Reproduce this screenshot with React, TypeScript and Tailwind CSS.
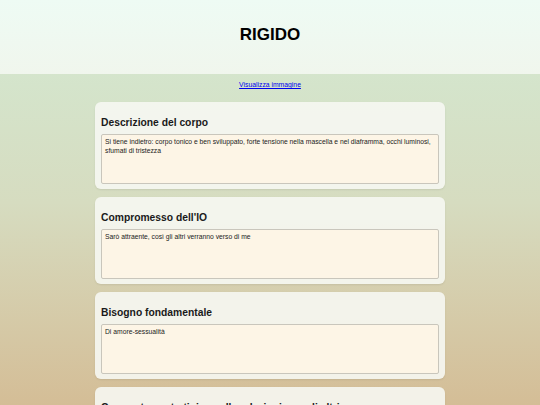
const sections = [
  {
    title: 'Descrizione del corpo',
    text: 'Si tiene indietro: corpo tonico e ben sviluppato, forte tensione nella mascella e nel diaframma, occhi luminosi, sfumati di tristezza',
  },
  { title: "Compromesso dell'IO", text: 'Sarò attraente, così gli altri verranno verso di me' },
  { title: 'Bisogno fondamentale', text: 'Di amore-sessualità' },
  { title: 'Comportamento tipico nelle relazioni con gli altri', text: 'Competitivo, orgoglioso, controlla i sentimenti' },
];

export default function App() {
  return (
    <div
      className="min-h-screen bg-fixed bg-gradient-to-b from-[#d3ead3] via-[#d6dcc0] to-[#d4bd96] text-black"
      style={{ fontFamily: '"Liberation Sans", Arial, sans-serif' }}
    >
      {/* Header */}
      <header className="h-[74px] flex items-center justify-center bg-gradient-to-b from-[#eefbf4] to-[#f0f6ed]">
        <h1 className="text-[17px] font-bold leading-none -mt-[5px]">RIGIDO</h1>
      </header>

      <div className="flex justify-center pt-[6px]">
        <a href="#" className="text-[6.8px] text-[#0000ee] underline leading-[10px]">
          Visualizza immagine
        </a>
      </div>

      <main className="w-[350px] mx-auto mt-[12px] flex flex-col gap-[8px] pb-4">
        {sections.map((s) => (
          <section key={s.title} className="rounded-[6px] bg-[#f6f7f2]/90 shadow-[0_1px_2px_rgba(0,0,0,0.08)] px-[6px] pt-[14px] pb-[5px]">
            <h2 className="text-[10.3px] font-bold leading-[14px] text-[#1a1a1a] mb-[4px]">{s.title}</h2>
            <textarea
              readOnly
              defaultValue={s.text}
              className="block w-full h-[50px] resize-none rounded-[2px] border border-[#c9c6bc] bg-[#fdf5e6] px-[3px] pt-[3px] text-[6.75px] leading-[8.5px] text-[#222] outline-none"
              style={{ fontFamily: '"Liberation Sans", Arial, sans-serif' }}
            />
          </section>
        ))}
      </main>
    </div>
  );
}
